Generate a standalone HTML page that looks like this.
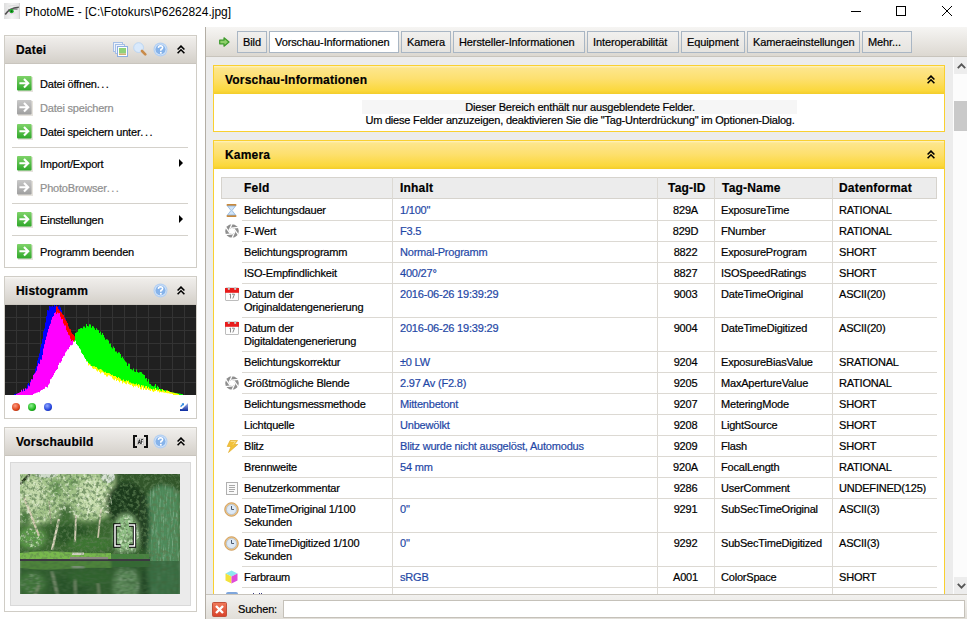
<!DOCTYPE html>
<html><head><meta charset="utf-8">
<style>
*{box-sizing:border-box;margin:0;padding:0}
html,body{width:967px;height:619px;overflow:hidden;background:#fff;font-family:"Liberation Sans",sans-serif;font-size:11px;line-height:13px;color:#000;letter-spacing:-0.2px;-webkit-text-stroke:0.2px currentColor}
.a{position:absolute}
.lp{left:4px;width:193px;border:1px solid #d0cdc6;background:#fff}
.lph{left:0;top:0;width:191px;height:28px;background:linear-gradient(#f8f6f3 0,#efedea 2px,#e3e0dc 50%,#d4d0c9);border-bottom:1px solid #c9c5be}
.lph .h{left:11px;top:8px;font-weight:bold;font-size:12px;letter-spacing:0.2px;color:#000}
.mi{left:35px;white-space:nowrap;color:#000}
.dis{color:#8f8f8f}
.sep{left:7px;width:176px;height:1px;background:#d4d1cb}
.tri{left:174px;width:0;height:0;border-top:4px solid transparent;border-bottom:4px solid transparent;border-left:4px solid #000}
#rborder{left:205px;top:27px;width:1px;height:592px;background:#b3aea5}
#tb{left:206px;top:27px;width:761px;height:30px;background:linear-gradient(#f6f5f3,#dcd8d1);border-bottom:1px solid #c8c4bc}
.tab{top:4px;height:22px;border:1px solid #a9b6c4;background:linear-gradient(#f1f0ee,#e6e4e0);padding-left:5px;letter-spacing:-0.1px;line-height:20px;white-space:nowrap}
.tab.act{background:#fff}
#content{left:206px;top:57px;width:747px;height:537px;background:#ececec;overflow:hidden}
.yp{border:1px solid #f9d030;background:#fff}
.yph{left:0;top:0;height:28px;background:linear-gradient(#fff4c4 0,#fde68c 2px,#fde070 45%,#fbd83c 88%,#f3cd2a 100%)}
.yph .h{left:11px;top:8px;font-weight:bold;font-size:12px;letter-spacing:0.2px}
#sb{left:953px;top:57px;width:14px;height:537px;background:#fcfcfc}
#search{left:206px;top:594px;width:761px;height:25px;background:linear-gradient(#f2f1ef,#e1ded8);border-top:1px solid #c8c4bc}
.row{left:0;width:716px}
.c{position:absolute;top:0;white-space:nowrap}
.ln{position:absolute;height:1px;background:#dcd9d3}
.vl{position:absolute;width:1px;background:#dcd9d3}
.blue{color:#1f48a6}

</style></head><body>
<svg width="0" height="0" style="position:absolute"><defs>
<linearGradient id="ggreen" x1="0" y1="0" x2="0" y2="1"><stop offset="0" stop-color="#7fd36a"/><stop offset="1" stop-color="#2fa82a"/></linearGradient>
<linearGradient id="gred" x1="0" y1="0" x2="0" y2="1"><stop offset="0" stop-color="#f07a5a"/><stop offset="1" stop-color="#d8422a"/></linearGradient>
<linearGradient id="gg" x1="0" y1="0" x2="0" y2="1"><stop offset="0" stop-color="#c8c8c8"/><stop offset="1" stop-color="#9f9f9f"/></linearGradient>
</defs></svg>
<div class="a" style="left:0;top:0;width:967px;height:27px;background:#fff">
<svg class="a" style="left:4px;top:3px" width="16" height="16" viewBox="0 0 16 16">
<defs><linearGradient id="eyebg" x1="0" y1="0" x2="1" y2="0"><stop offset="0" stop-color="#dedede"/><stop offset="0.5" stop-color="#f4f4f4"/><stop offset="0.9" stop-color="#e6e6e6"/><stop offset="1" stop-color="#c9c9c9"/></linearGradient></defs>
<rect width="16" height="16" fill="url(#eyebg)"/>
<path d="M4 10.5 Q8 12.8 12 10.2 L11 8.5 Q7.5 10 4.5 9 Z" fill="#ecdcec"/>
<path d="M1.2 11.5 Q5 5 14.8 4.2" fill="none" stroke="#505050" stroke-width="1.6"/>
<path d="M4 7 Q8 5.5 13.5 6.2" fill="none" stroke="#6a6a6a" stroke-width="1"/>
<path d="M4.6 3.2 Q9 2.2 13.5 3" fill="none" stroke="#d0d0d0" stroke-width="0.8"/>
<circle cx="7.6" cy="8.2" r="2.1" fill="#1faa2a"/>
<circle cx="7.6" cy="8.2" r="0.8" fill="#0a4a10"/>
</svg>
<div class="a" style="left:25px;top:5px;font-size:12px;line-height:14px;letter-spacing:0;-webkit-text-stroke:0">PhotoME - [C:\Fotokurs\P6262824.jpg]</div>
<div class="a" style="left:851px;top:11px;width:10px;height:1px;background:#000"></div>
<div class="a" style="left:896px;top:6px;width:10px;height:10px;border:1px solid #000"></div>
<svg class="a" style="left:942px;top:6px" width="10" height="10" viewBox="0 0 10 10"><path d="M0 0 L10 10 M10 0 L0 10" stroke="#000" stroke-width="1"/></svg>
</div>

<div class="a lp" style="top:35px;height:233px">
<div class="a lph"><div class="a h">Datei</div>
<svg class="a" style="left:108px;top:6px" width="15" height="15" viewBox="0 0 15 15">
<rect x="0.5" y="0.5" width="9" height="9" fill="#eef3fb" stroke="#a6bfe6"/>
<rect x="2.5" y="2.5" width="9" height="9" fill="#eef3fb" stroke="#a6bfe6"/>
<rect x="4.5" y="4.5" width="10" height="10" fill="#fff" stroke="#8eaee0"/>
<rect x="6" y="6" width="7" height="5.5" fill="#8fd27a"/><rect x="6" y="11.5" width="7" height="1.5" fill="#d0ad72"/>
</svg>
<svg class="a" style="left:128px;top:6px" width="14" height="14" viewBox="0 0 14 14">
<circle cx="5.6" cy="5.6" r="4.9" fill="#d9e9fb" stroke="#bcd6f3" stroke-width="1"/>
<line x1="9" y1="9" x2="12.3" y2="12.3" stroke="#c98b4a" stroke-width="2.6" stroke-linecap="round"/>
</svg>
<svg class="a" style="left:148px;top:6px" width="15" height="15" viewBox="0 0 15 15"><circle cx="7.5" cy="7.5" r="7" fill="#b4d0f2"/><circle cx="7.5" cy="7.5" r="5.8" fill="#d9e8fa"/><circle cx="7.5" cy="7.5" r="5.1" fill="#86b3ea"/><path d="M5.4 5.9 Q5.5 3.7 7.6 3.7 Q9.7 3.8 9.6 5.6 Q9.5 6.9 7.9 7.6 L7.8 8.7" fill="none" stroke="#fff" stroke-width="1.6"/><rect x="7" y="9.9" width="1.7" height="1.7" fill="#fff"/></svg><svg class="a" style="left:172px;top:9px" width="8" height="9" viewBox="0 0 8 9"><path d="M0.6 4.5 L4 1.1 L7.4 4.5 M0.6 8.2 L4 4.8 L7.4 8.2" fill="none" stroke="#000" stroke-width="1.6"/></svg></div>
<svg class="a" style="left:12px;top:40px" width="16" height="16" viewBox="0 0 16 16"><rect x="1" y="1" width="15" height="15" fill="#e6e3dd"/><rect x="0" y="0" width="14.6" height="14.6" rx="1" fill="url(#ggreen)"/><path d="M2.4 7.3 H11 M7 3 L11.2 7.3 L7 11.6" fill="none" stroke="#fff" stroke-width="2.1"/></svg><div class="a mi" style="top:42px">Datei öffnen<span style="letter-spacing:1.5px">...</span></div>
<svg class="a" style="left:12px;top:64px" width="16" height="16" viewBox="0 0 16 16"><rect x="1" y="1" width="15" height="15" fill="#e6e3dd"/><rect x="0" y="0" width="14.6" height="14.6" rx="1" fill="url(#gg)"/><path d="M2.4 7.3 H11 M7 3 L11.2 7.3 L7 11.6" fill="none" stroke="#fff" stroke-width="2.1"/></svg><div class="a mi dis" style="top:66px">Datei speichern</div>
<svg class="a" style="left:12px;top:88px" width="16" height="16" viewBox="0 0 16 16"><rect x="1" y="1" width="15" height="15" fill="#e6e3dd"/><rect x="0" y="0" width="14.6" height="14.6" rx="1" fill="url(#ggreen)"/><path d="M2.4 7.3 H11 M7 3 L11.2 7.3 L7 11.6" fill="none" stroke="#fff" stroke-width="2.1"/></svg><div class="a mi" style="top:90px">Datei speichern unter<span style="letter-spacing:1.5px">...</span></div>
<svg class="a" style="left:12px;top:120px" width="16" height="16" viewBox="0 0 16 16"><rect x="1" y="1" width="15" height="15" fill="#e6e3dd"/><rect x="0" y="0" width="14.6" height="14.6" rx="1" fill="url(#ggreen)"/><path d="M2.4 7.3 H11 M7 3 L11.2 7.3 L7 11.6" fill="none" stroke="#fff" stroke-width="2.1"/></svg><div class="a mi" style="top:122px">Import/Export</div>
<svg class="a" style="left:12px;top:144px" width="16" height="16" viewBox="0 0 16 16"><rect x="1" y="1" width="15" height="15" fill="#e6e3dd"/><rect x="0" y="0" width="14.6" height="14.6" rx="1" fill="url(#gg)"/><path d="M2.4 7.3 H11 M7 3 L11.2 7.3 L7 11.6" fill="none" stroke="#fff" stroke-width="2.1"/></svg><div class="a mi dis" style="top:146px">PhotoBrowser<span style="letter-spacing:1.5px">...</span></div>
<svg class="a" style="left:12px;top:176px" width="16" height="16" viewBox="0 0 16 16"><rect x="1" y="1" width="15" height="15" fill="#e6e3dd"/><rect x="0" y="0" width="14.6" height="14.6" rx="1" fill="url(#ggreen)"/><path d="M2.4 7.3 H11 M7 3 L11.2 7.3 L7 11.6" fill="none" stroke="#fff" stroke-width="2.1"/></svg><div class="a mi" style="top:178px">Einstellungen</div>
<svg class="a" style="left:12px;top:208px" width="16" height="16" viewBox="0 0 16 16"><rect x="1" y="1" width="15" height="15" fill="#e6e3dd"/><rect x="0" y="0" width="14.6" height="14.6" rx="1" fill="url(#ggreen)"/><path d="M2.4 7.3 H11 M7 3 L11.2 7.3 L7 11.6" fill="none" stroke="#fff" stroke-width="2.1"/></svg><div class="a mi" style="top:210px">Programm beenden</div>
<div class="a sep" style="top:111px"></div>
<div class="a sep" style="top:167px"></div>
<div class="a sep" style="top:199px"></div>
<div class="a tri" style="top:123px"></div>
<div class="a tri" style="top:179px"></div>
</div>
<div class="a lp" style="top:276px;height:143px">
<div class="a lph"><div class="a h">Histogramm</div>
<svg class="a" style="left:148px;top:6px" width="15" height="15" viewBox="0 0 15 15"><circle cx="7.5" cy="7.5" r="7" fill="#b4d0f2"/><circle cx="7.5" cy="7.5" r="5.8" fill="#d9e8fa"/><circle cx="7.5" cy="7.5" r="5.1" fill="#86b3ea"/><path d="M5.4 5.9 Q5.5 3.7 7.6 3.7 Q9.7 3.8 9.6 5.6 Q9.5 6.9 7.9 7.6 L7.8 8.7" fill="none" stroke="#fff" stroke-width="1.6"/><rect x="7" y="9.9" width="1.7" height="1.7" fill="#fff"/></svg><svg class="a" style="left:172px;top:9px" width="8" height="9" viewBox="0 0 8 9"><path d="M0.6 4.5 L4 1.1 L7.4 4.5 M0.6 8.2 L4 4.8 L7.4 8.2" fill="none" stroke="#000" stroke-width="1.6"/></svg></div>
<svg class="a" style="left:0;top:28px" width="191" height="90" viewBox="0 0 191 90"><rect width="191" height="90" fill="#202020"/><rect x="11" y="0" width="1" height="90" fill="#333333"/><rect x="23" y="0" width="1" height="90" fill="#333333"/><rect x="35" y="0" width="1" height="90" fill="#333333"/><rect x="47" y="0" width="1" height="90" fill="#333333"/><rect x="59" y="0" width="1" height="90" fill="#333333"/><rect x="71" y="0" width="1" height="90" fill="#333333"/><rect x="83" y="0" width="1" height="90" fill="#333333"/><rect x="95" y="0" width="1" height="90" fill="#333333"/><rect x="107" y="0" width="1" height="90" fill="#333333"/><rect x="119" y="0" width="1" height="90" fill="#333333"/><rect x="131" y="0" width="1" height="90" fill="#333333"/><rect x="143" y="0" width="1" height="90" fill="#333333"/><rect x="155" y="0" width="1" height="90" fill="#333333"/><rect x="167" y="0" width="1" height="90" fill="#333333"/><rect x="179" y="0" width="1" height="90" fill="#333333"/><rect x="0" y="12" width="191" height="1" fill="#333333"/><rect x="0" y="25" width="191" height="1" fill="#333333"/><rect x="0" y="38" width="191" height="1" fill="#333333"/><rect x="0" y="51" width="191" height="1" fill="#333333"/><rect x="0" y="64" width="191" height="1" fill="#333333"/><rect x="0" y="77" width="191" height="1" fill="#333333"/><path d="M9 90 L9.0 89.0 L10.0 89.0 L10.0 88.8 L11.0 88.8 L11.0 88.7 L12.0 88.7 L12.0 88.5 L13.0 88.5 L13.0 88.3 L14.0 88.3 L14.0 88.2 L15.0 88.2 L15.0 88.0 L16.0 88.0 L16.0 87.2 L17.0 87.2 L17.0 85.5 L18.0 85.5 L18.0 85.9 L19.0 85.9 L19.0 84.5 L20.0 84.5 L20.0 84.2 L21.0 84.2 L21.0 83.0 L22.0 83.0 L22.0 79.5 L23.0 79.5 L23.0 78.1 L24.0 78.1 L24.0 79.7 L25.0 79.7 L25.0 75.7 L26.0 75.7 L26.0 73.9 L27.0 73.9 L27.0 74.3 L28.0 74.3 L28.0 69.5 L29.0 69.5 L29.0 68.3 L30.0 68.3 L30.0 63.6 L31.0 63.6 L31.0 60.9 L32.0 60.9 L32.0 55.6 L33.0 55.6 L33.0 52.5 L34.0 52.5 L34.0 48.5 L35.0 48.5 L35.0 42.6 L36.0 42.6 L36.0 39.0 L37.0 39.0 L37.0 33.7 L38.0 33.7 L38.0 26.3 L39.0 26.3 L39.0 23.5 L40.0 23.5 L40.0 17.4 L41.0 17.4 L41.0 11.2 L42.0 11.2 L42.0 5.1 L43.0 5.1 L43.0 5.5 L44.0 5.5 L44.0 0.9 L45.0 0.9 L45.0 1.4 L46.0 1.4 L46.0 1.5 L47.0 1.5 L47.0 0.9 L48.0 0.9 L48.0 1.7 L49.0 1.7 L49.0 -0.4 L50.0 -0.4 L50.0 1.2 L51.0 1.2 L51.0 -0.2 L52.0 -0.2 L52.0 1.7 L53.0 1.7 L53.0 1.5 L54.0 1.5 L54.0 0.4 L55.0 0.4 L55.0 2.5 L56.0 2.5 L56.0 4.9 L57.0 4.9 L57.0 9.9 L58.0 9.9 L58.0 9.7 L59.0 9.7 L59.0 12.5 L60.0 12.5 L60.0 13.2 L61.0 13.2 L61.0 16.7 L62.0 16.7 L62.0 18.9 L63.0 18.9 L63.0 21.4 L64.0 21.4 L64.0 24.3 L65.0 24.3 L65.0 26.3 L66.0 26.3 L66.0 29.6 L67.0 29.6 L67.0 30.7 L68.0 30.7 L68.0 33.0 L69.0 33.0 L69.0 34.1 L70.0 34.1 L70.0 36.0 L71.0 36.0 L71.0 89.0 L72.0 89.0 L72 90 Z" fill="#0000ff"/><path d="M50 90 L50.0 89.0 L51.0 89.0 L51.0 1.3 L52.0 1.3 L52.0 1.7 L53.0 1.7 L53.0 4.1 L54.0 4.1 L54.0 5.5 L55.0 5.5 L55.0 6.6 L56.0 6.6 L56.0 7.6 L57.0 7.6 L57.0 9.3 L58.0 9.3 L58.0 10.0 L59.0 10.0 L59.0 12.5 L60.0 12.5 L60.0 14.4 L61.0 14.4 L61.0 16.2 L62.0 16.2 L62.0 18.1 L63.0 18.1 L63.0 21.6 L64.0 21.6 L64.0 23.8 L65.0 23.8 L65.0 24.3 L66.0 24.3 L66.0 27.5 L67.0 27.5 L67.0 28.9 L68.0 28.9 L68.0 29.8 L69.0 29.8 L69.0 31.3 L70.0 31.3 L70.0 33.4 L71.0 33.4 L71.0 40.6 L72.0 40.6 L72.0 89.0 L73.0 89.0 L73 90 Z" fill="#ff0000"/><path d="M11 90 L11.0 89.0 L12.0 89.0 L12.0 88.5 L13.0 88.5 L13.0 88.0 L14.0 88.0 L14.0 87.5 L15.0 87.5 L15.0 87.0 L16.0 87.0 L16.0 84.7 L17.0 84.7 L17.0 86.5 L18.0 86.5 L18.0 83.7 L19.0 83.7 L19.0 85.9 L20.0 85.9 L20.0 83.2 L21.0 83.2 L21.0 84.2 L22.0 84.2 L22.0 83.4 L23.0 83.4 L23.0 80.4 L24.0 80.4 L24.0 81.2 L25.0 81.2 L25.0 77.2 L26.0 77.2 L26.0 74.3 L27.0 74.3 L27.0 74.4 L28.0 74.4 L28.0 70.1 L29.0 70.1 L29.0 68.8 L30.0 68.8 L30.0 67.6 L31.0 67.6 L31.0 65.8 L32.0 65.8 L32.0 61.3 L33.0 61.3 L33.0 58.2 L34.0 58.2 L34.0 59.1 L35.0 59.1 L35.0 54.6 L36.0 54.6 L36.0 54.8 L37.0 54.8 L37.0 50.1 L38.0 50.1 L38.0 43.5 L39.0 43.5 L39.0 39.3 L40.0 39.3 L40.0 35.1 L41.0 35.1 L41.0 31.6 L42.0 31.6 L42.0 27.4 L43.0 27.4 L43.0 23.9 L44.0 23.9 L44.0 20.8 L45.0 20.8 L45.0 18.8 L46.0 18.8 L46.0 14.7 L47.0 14.7 L47.0 12.1 L48.0 12.1 L48.0 10.9 L49.0 10.9 L49.0 8.0 L50.0 8.0 L50.0 7.2 L51.0 7.2 L51.0 8.9 L52.0 8.9 L52.0 7.6 L53.0 7.6 L53.0 8.2 L54.0 8.2 L54.0 8.0 L55.0 8.0 L55.0 11.7 L56.0 11.7 L56.0 14.3 L57.0 14.3 L57.0 14.1 L58.0 14.1 L58.0 18.5 L59.0 18.5 L59.0 20.5 L60.0 20.5 L60.0 20.6 L61.0 20.6 L61.0 25.2 L62.0 25.2 L62.0 26.9 L63.0 26.9 L63.0 29.7 L64.0 29.7 L64.0 30.4 L65.0 30.4 L65.0 33.8 L66.0 33.8 L66.0 36.0 L67.0 36.0 L67.0 35.1 L68.0 35.1 L68.0 37.2 L69.0 37.2 L69.0 43.7 L70.0 43.7 L70.0 89.0 L71.0 89.0 L71 90 Z" fill="#ff00ff"/><path d="M68 90 L68.0 89.0 L69.0 89.0 L69.0 35.0 L70.0 35.0 L70.0 27.9 L71.0 27.9 L71.0 27.5 L72.0 27.5 L72.0 26.7 L73.0 26.7 L73.0 24.2 L74.0 24.2 L74.0 23.9 L75.0 23.9 L75.0 23.2 L76.0 23.2 L76.0 22.9 L77.0 22.9 L77.0 23.4 L78.0 23.4 L78.0 21.6 L79.0 21.6 L79.0 21.5 L80.0 21.5 L80.0 22.7 L81.0 22.7 L81.0 18.9 L82.0 18.9 L82.0 21.0 L83.0 21.0 L83.0 21.4 L84.0 21.4 L84.0 19.2 L85.0 19.2 L85.0 19.4 L86.0 19.4 L86.0 22.7 L87.0 22.7 L87.0 20.9 L88.0 20.9 L88.0 21.4 L89.0 21.4 L89.0 23.2 L90.0 23.2 L90.0 25.1 L91.0 25.1 L91.0 23.2 L92.0 23.2 L92.0 24.7 L93.0 24.7 L93.0 25.3 L94.0 25.3 L94.0 28.0 L95.0 28.0 L95.0 26.7 L96.0 26.7 L96.0 29.8 L97.0 29.8 L97.0 27.9 L98.0 27.9 L98.0 29.9 L99.0 29.9 L99.0 32.5 L100.0 32.5 L100.0 34.7 L101.0 34.7 L101.0 34.2 L102.0 34.2 L102.0 34.6 L103.0 34.6 L103.0 35.5 L104.0 35.5 L104.0 38.7 L105.0 38.7 L105.0 38.6 L106.0 38.6 L106.0 42.3 L107.0 42.3 L107.0 43.5 L108.0 43.5 L108.0 41.6 L109.0 41.6 L109.0 43.0 L110.0 43.0 L110.0 46.4 L111.0 46.4 L111.0 46.6 L112.0 46.6 L112.0 48.3 L113.0 48.3 L113.0 47.3 L114.0 47.3 L114.0 47.4 L115.0 47.4 L115.0 49.1 L116.0 49.1 L116.0 52.7 L117.0 52.7 L117.0 51.8 L118.0 51.8 L118.0 53.5 L119.0 53.5 L119.0 55.2 L120.0 55.2 L120.0 56.6 L121.0 56.6 L121.0 57.6 L122.0 57.6 L122.0 60.9 L123.0 60.9 L123.0 58.5 L124.0 58.5 L124.0 58.8 L125.0 58.8 L125.0 64.0 L126.0 64.0 L126.0 64.3 L127.0 64.3 L127.0 65.3 L128.0 65.3 L128.0 63.5 L129.0 63.5 L129.0 66.4 L130.0 66.4 L130.0 66.9 L131.0 66.9 L131.0 64.2 L132.0 64.2 L132.0 66.9 L133.0 66.9 L133.0 67.7 L134.0 67.7 L134.0 67.3 L135.0 67.3 L135.0 67.1 L136.0 67.1 L136.0 67.3 L137.0 67.3 L137.0 68.7 L138.0 68.7 L138.0 69.4 L139.0 69.4 L139.0 69.9 L140.0 69.9 L140.0 73.4 L141.0 73.4 L141.0 73.1 L142.0 73.1 L142.0 76.4 L143.0 76.4 L143.0 74.0 L144.0 74.0 L144.0 78.8 L145.0 78.8 L145.0 78.9 L146.0 78.9 L146.0 80.5 L147.0 80.5 L147.0 80.9 L148.0 80.9 L148.0 81.6 L149.0 81.6 L149.0 80.7 L150.0 80.7 L150.0 78.9 L151.0 78.9 L151.0 82.7 L152.0 82.7 L152.0 80.8 L153.0 80.8 L153.0 81.9 L154.0 81.9 L154.0 84.1 L155.0 84.1 L155.0 84.1 L156.0 84.1 L156.0 84.0 L157.0 84.0 L157.0 86.7 L158.0 86.7 L158.0 85.7 L159.0 85.7 L159.0 84.9 L160.0 84.9 L160.0 84.9 L161.0 84.9 L161.0 87.8 L162.0 87.8 L162.0 86.3 L163.0 86.3 L163.0 87.8 L164.0 87.8 L164.0 86.1 L165.0 86.1 L165.0 87.0 L166.0 87.0 L166.0 87.2 L167.0 87.2 L167.0 87.4 L168.0 87.4 L168.0 87.6 L169.0 87.6 L169.0 87.8 L170.0 87.8 L170.0 88.0 L171.0 88.0 L171.0 88.1 L172.0 88.1 L172.0 88.3 L173.0 88.3 L173.0 88.4 L174.0 88.4 L174.0 88.6 L175.0 88.6 L175.0 88.7 L176.0 88.7 L176.0 88.9 L177.0 88.9 L177.0 89.0 L178.0 89.0 L178 90 Z" fill="#00ff00"/><path d="M77 90 L77.0 89.0 L78.0 89.0 L78.0 51.9 L79.0 51.9 L79.0 53.5 L80.0 53.5 L80.0 55.1 L81.0 55.1 L81.0 55.7 L82.0 55.7 L82.0 57.5 L83.0 57.5 L83.0 58.9 L84.0 58.9 L84.0 60.1 L85.0 60.1 L85.0 61.3 L86.0 61.3 L86.0 61.0 L87.0 61.0 L87.0 62.1 L88.0 62.1 L88.0 62.9 L89.0 62.9 L89.0 62.5 L90.0 62.5 L90.0 75.8 L91.0 75.8 L91.0 89.0 L92.0 89.0 L92 90 Z" fill="#00ffff"/><path d="M68 90 L68.0 89.0 L69.0 89.0 L69.0 36.4 L70.0 36.4 L70.0 39.1 L71.0 39.1 L71.0 40.8 L72.0 40.8 L72.0 42.9 L73.0 42.9 L73.0 45.4 L74.0 45.4 L74.0 45.3 L75.0 45.3 L75.0 47.2 L76.0 47.2 L76.0 49.1 L77.0 49.1 L77.0 50.6 L78.0 50.6 L78.0 52.0 L79.0 52.0 L79.0 55.6 L80.0 55.6 L80.0 56.9 L81.0 56.9 L81.0 55.8 L82.0 55.8 L82.0 57.6 L83.0 57.6 L83.0 58.0 L84.0 58.0 L84.0 58.8 L85.0 58.8 L85.0 59.6 L86.0 59.6 L86.0 60.9 L87.0 60.9 L87.0 61.2 L88.0 61.2 L88.0 61.2 L89.0 61.2 L89.0 61.3 L90.0 61.3 L90.0 62.1 L91.0 62.1 L91.0 62.1 L92.0 62.1 L92.0 63.6 L93.0 63.6 L93.0 64.5 L94.0 64.5 L94.0 64.2 L95.0 64.2 L95.0 64.0 L96.0 64.0 L96.0 64.6 L97.0 64.6 L97.0 65.5 L98.0 65.5 L98.0 66.5 L99.0 66.5 L99.0 67.3 L100.0 67.3 L100.0 66.7 L101.0 66.7 L101.0 68.1 L102.0 68.1 L102.0 68.1 L103.0 68.1 L103.0 68.0 L104.0 68.0 L104.0 68.3 L105.0 68.3 L105.0 69.0 L106.0 69.0 L106.0 70.0 L107.0 70.0 L107.0 69.8 L108.0 69.8 L108.0 71.0 L109.0 71.0 L109.0 70.9 L110.0 70.9 L110.0 70.9 L111.0 70.9 L111.0 72.1 L112.0 72.1 L112.0 73.0 L113.0 73.0 L113.0 72.0 L114.0 72.0 L114.0 73.3 L115.0 73.3 L115.0 73.8 L116.0 73.8 L116.0 75.2 L117.0 75.2 L117.0 75.6 L118.0 75.6 L118.0 74.6 L119.0 74.6 L119.0 76.2 L120.0 76.2 L120.0 76.2 L121.0 76.2 L121.0 75.2 L122.0 75.2 L122.0 76.0 L123.0 76.0 L123.0 75.5 L124.0 75.5 L124.0 77.5 L125.0 77.5 L125.0 77.4 L126.0 77.4 L126.0 78.3 L127.0 78.3 L127.0 78.5 L128.0 78.5 L128.0 78.6 L129.0 78.6 L129.0 79.2 L130.0 79.2 L130.0 79.2 L131.0 79.2 L131.0 78.4 L132.0 78.4 L132.0 80.0 L133.0 80.0 L133.0 79.0 L134.0 79.0 L134.0 79.7 L135.0 79.7 L135.0 81.7 L136.0 81.7 L136.0 80.1 L137.0 80.1 L137.0 80.4 L138.0 80.4 L138.0 80.6 L139.0 80.6 L139.0 82.7 L140.0 82.7 L140.0 81.2 L141.0 81.2 L141.0 81.1 L142.0 81.1 L142.0 83.2 L143.0 83.2 L143.0 81.7 L144.0 81.7 L144.0 83.6 L145.0 83.6 L145.0 83.4 L146.0 83.4 L146.0 84.0 L147.0 84.0 L147.0 84.5 L148.0 84.5 L148.0 83.8 L149.0 83.8 L149.0 84.5 L150.0 84.5 L150.0 82.9 L151.0 82.9 L151.0 84.8 L152.0 84.8 L152.0 84.4 L153.0 84.4 L153.0 85.1 L154.0 85.1 L154.0 83.9 L155.0 83.9 L155.0 85.6 L156.0 85.6 L156.0 86.2 L157.0 86.2 L157.0 84.3 L158.0 84.3 L158.0 85.2 L159.0 85.2 L159.0 86.0 L160.0 86.0 L160.0 86.8 L161.0 86.8 L161.0 85.6 L162.0 85.6 L162.0 85.6 L163.0 85.6 L163.0 86.0 L164.0 86.0 L164.0 87.1 L165.0 87.1 L165.0 87.0 L166.0 87.0 L166.0 87.2 L167.0 87.2 L167.0 87.5 L168.0 87.5 L168.0 87.8 L169.0 87.8 L169.0 88.0 L170.0 88.0 L170.0 88.2 L171.0 88.2 L171.0 88.5 L172.0 88.5 L172.0 88.8 L173.0 88.8 L173.0 89.0 L174.0 89.0 L174 90 Z" fill="#ffff00"/><path d="M28 90 L28.0 89.0 L29.0 89.0 L29.0 88.6 L30.0 88.6 L30.0 88.2 L31.0 88.2 L31.0 87.8 L32.0 87.8 L32.0 87.4 L33.0 87.4 L33.0 87.0 L34.0 87.0 L34.0 87.3 L35.0 87.3 L35.0 85.7 L36.0 85.7 L36.0 85.1 L37.0 85.1 L37.0 84.7 L38.0 84.7 L38.0 84.1 L39.0 84.1 L39.0 83.8 L40.0 83.8 L40.0 81.7 L41.0 81.7 L41.0 82.0 L42.0 82.0 L42.0 82.4 L43.0 82.4 L43.0 79.7 L44.0 79.7 L44.0 78.4 L45.0 78.4 L45.0 74.3 L46.0 74.3 L46.0 73.6 L47.0 73.6 L47.0 72.1 L48.0 72.1 L48.0 70.2 L49.0 70.2 L49.0 68.1 L50.0 68.1 L50.0 66.2 L51.0 66.2 L51.0 64.9 L52.0 64.9 L52.0 63.9 L53.0 63.9 L53.0 59.9 L54.0 59.9 L54.0 57.8 L55.0 57.8 L55.0 57.7 L56.0 57.7 L56.0 56.2 L57.0 56.2 L57.0 53.1 L58.0 53.1 L58.0 51.3 L59.0 51.3 L59.0 50.7 L60.0 50.7 L60.0 47.6 L61.0 47.6 L61.0 46.3 L62.0 46.3 L62.0 44.6 L63.0 44.6 L63.0 44.3 L64.0 44.3 L64.0 41.9 L65.0 41.9 L65.0 40.2 L66.0 40.2 L66.0 40.2 L67.0 40.2 L67.0 39.7 L68.0 39.7 L68.0 36.4 L69.0 36.4 L69.0 37.1 L70.0 37.1 L70.0 35.7 L71.0 35.7 L71.0 39.1 L72.0 39.1 L72.0 40.3 L73.0 40.3 L73.0 41.3 L74.0 41.3 L74.0 43.2 L75.0 43.2 L75.0 44.6 L76.0 44.6 L76.0 47.7 L77.0 47.7 L77.0 49.1 L78.0 49.1 L78.0 50.3 L79.0 50.3 L79.0 52.6 L80.0 52.6 L80.0 54.0 L81.0 54.0 L81.0 56.8 L82.0 56.8 L82.0 56.4 L83.0 56.4 L83.0 60.5 L84.0 60.5 L84.0 59.7 L85.0 59.7 L85.0 60.9 L86.0 60.9 L86.0 61.3 L87.0 61.3 L87.0 63.2 L88.0 63.2 L88.0 64.0 L89.0 64.0 L89.0 63.7 L90.0 63.7 L90.0 64.1 L91.0 64.1 L91.0 65.4 L92.0 65.4 L92.0 66.4 L93.0 66.4 L93.0 65.6 L94.0 65.6 L94.0 67.1 L95.0 67.1 L95.0 68.4 L96.0 68.4 L96.0 67.4 L97.0 67.4 L97.0 67.2 L98.0 67.2 L98.0 67.7 L99.0 67.7 L99.0 69.7 L100.0 69.7 L100.0 70.0 L101.0 70.0 L101.0 71.4 L102.0 71.4 L102.0 71.6 L103.0 71.6 L103.0 70.2 L104.0 70.2 L104.0 70.6 L105.0 70.6 L105.0 71.3 L106.0 71.3 L106.0 71.6 L107.0 71.6 L107.0 73.6 L108.0 73.6 L108.0 74.6 L109.0 74.6 L109.0 75.2 L110.0 75.2 L110.0 73.8 L111.0 73.8 L111.0 76.1 L112.0 76.1 L112.0 74.9 L113.0 74.9 L113.0 75.8 L114.0 75.8 L114.0 77.2 L115.0 77.2 L115.0 75.8 L116.0 75.8 L116.0 76.1 L117.0 76.1 L117.0 78.6 L118.0 78.6 L118.0 77.3 L119.0 77.3 L119.0 77.8 L120.0 77.8 L120.0 78.7 L121.0 78.7 L121.0 79.3 L122.0 79.3 L122.0 77.6 L123.0 77.6 L123.0 78.9 L124.0 78.9 L124.0 79.5 L125.0 79.5 L125.0 80.0 L126.0 80.0 L126.0 79.4 L127.0 79.4 L127.0 80.9 L128.0 80.9 L128.0 82.3 L129.0 82.3 L129.0 80.9 L130.0 80.9 L130.0 81.6 L131.0 81.6 L131.0 80.7 L132.0 80.7 L132.0 81.4 L133.0 81.4 L133.0 82.9 L134.0 82.9 L134.0 81.5 L135.0 81.5 L135.0 84.2 L136.0 84.2 L136.0 84.4 L137.0 84.4 L137.0 82.2 L138.0 82.2 L138.0 84.9 L139.0 84.9 L139.0 83.4 L140.0 83.4 L140.0 84.8 L141.0 84.8 L141.0 85.0 L142.0 85.0 L142.0 83.8 L143.0 83.8 L143.0 85.1 L144.0 85.1 L144.0 85.3 L145.0 85.3 L145.0 85.9 L146.0 85.9 L146.0 84.5 L147.0 84.5 L147.0 86.2 L148.0 86.2 L148.0 87.0 L149.0 87.0 L149.0 86.3 L150.0 86.3 L150.0 86.1 L151.0 86.1 L151.0 85.0 L152.0 85.0 L152.0 86.4 L153.0 86.4 L153.0 86.2 L154.0 86.2 L154.0 87.5 L155.0 87.5 L155.0 87.0 L156.0 87.0 L156.0 87.2 L157.0 87.2 L157.0 87.3 L158.0 87.3 L158.0 87.5 L159.0 87.5 L159.0 87.7 L160.0 87.7 L160.0 87.8 L161.0 87.8 L161.0 88.0 L162.0 88.0 L162.0 88.2 L163.0 88.2 L163.0 88.3 L164.0 88.3 L164.0 88.5 L165.0 88.5 L165.0 88.7 L166.0 88.7 L166.0 88.8 L167.0 88.8 L167.0 89.0 L168.0 89.0 L168 90 Z" fill="#ffffff"/></svg>
<div class="a" style="left:7px;top:126px;width:8px;height:8px;border-radius:50%;background:radial-gradient(circle at 40% 35%,#ff9a80,#d83a10 65%,#444 100%)"></div>
<div class="a" style="left:23px;top:126px;width:8px;height:8px;border-radius:50%;background:radial-gradient(circle at 40% 35%,#90f090,#10b010 65%,#444 100%)"></div>
<div class="a" style="left:39px;top:126px;width:8px;height:8px;border-radius:50%;background:radial-gradient(circle at 40% 35%,#90a8ff,#1a3ad8 65%,#444 100%)"></div>
<svg class="a" style="left:175px;top:126px" width="8" height="8" viewBox="0 0 8 8"><defs><linearGradient id="hic" x1="0" y1="0" x2="0" y2="1"><stop offset="0" stop-color="#a8b8e8"/><stop offset="1" stop-color="#0a2aa0"/></linearGradient></defs><path d="M0 8 V6 H2 L8 0 V8 Z" fill="url(#hic)"/><path d="M0.6 3.6 L3 1.2" stroke="#2a88e0" stroke-width="1.3"/><path d="M1.6 0.3 H4 V2.7 Z" fill="#2a88e0"/></svg>
</div>
<div class="a lp" style="top:427px;height:185px">
<div class="a lph"><div class="a h">Vorschaubild</div>
<svg class="a" style="left:128px;top:7px" width="15" height="13" viewBox="0 0 15 13"><path d="M4 1 H1 V12 H4 M11 1 H14 V12 H11" fill="none" stroke="#111" stroke-width="2"/><rect x="4.5" y="3.5" width="6" height="6" fill="#fff" stroke="#777" stroke-width="0.6" stroke-dasharray="1 1"/><path d="M5.2 9 L6.3 4.6 L7.4 9 M5.6 7.5 H7 M8.2 9 V4.6 H10 M8.2 6.8 H9.6" fill="none" stroke="#111" stroke-width="0.9"/></svg>
<svg class="a" style="left:148px;top:6px" width="15" height="15" viewBox="0 0 15 15"><circle cx="7.5" cy="7.5" r="7" fill="#b4d0f2"/><circle cx="7.5" cy="7.5" r="5.8" fill="#d9e8fa"/><circle cx="7.5" cy="7.5" r="5.1" fill="#86b3ea"/><path d="M5.4 5.9 Q5.5 3.7 7.6 3.7 Q9.7 3.8 9.6 5.6 Q9.5 6.9 7.9 7.6 L7.8 8.7" fill="none" stroke="#fff" stroke-width="1.6"/><rect x="7" y="9.9" width="1.7" height="1.7" fill="#fff"/></svg><svg class="a" style="left:172px;top:9px" width="8" height="9" viewBox="0 0 8 9"><path d="M0.6 4.5 L4 1.1 L7.4 4.5 M0.6 8.2 L4 4.8 L7.4 8.2" fill="none" stroke="#000" stroke-width="1.6"/></svg></div>
<div class="a" style="left:5px;top:34px;width:181px;height:144px;background:#ebebeb;border:1px solid #d9d9d9">
<svg class="a" style="left:9px;top:11px" width="160" height="120" viewBox="0 0 160 120">
<defs>
<filter id="bl" x="-30%" y="-30%" width="160%" height="160%"><feGaussianBlur stdDeviation="2.2"/></filter>
<filter id="bl2" x="-30%" y="-30%" width="160%" height="160%"><feGaussianBlur stdDeviation="0.5"/></filter>
<filter id="texd" x="0" y="0" width="100%" height="100%"><feTurbulence type="fractalNoise" baseFrequency="0.3" numOctaves="3" seed="7"/><feColorMatrix type="matrix" values="0 0 0 0 0.1  0 0 0 0 0.2  0 0 0 0 0.08  -4 0 0 0 2.2"/><feGaussianBlur stdDeviation="0.45"/></filter>
<filter id="texl" x="0" y="0" width="100%" height="100%"><feTurbulence type="fractalNoise" baseFrequency="0.3" numOctaves="3" seed="13"/><feColorMatrix type="matrix" values="0 0 0 0 0.85  0 0 0 0 0.92  0 0 0 0 0.75  4 0 0 0 -2.0"/><feGaussianBlur stdDeviation="0.45"/></filter>
<filter id="streak" x="0" y="0" width="100%" height="100%"><feTurbulence type="fractalNoise" baseFrequency="0.6 0.08" numOctaves="2" seed="5"/><feColorMatrix type="matrix" values="0 0 0 0 0.7  0 0 0 0 0.86  0 0 0 0 0.74  3 0 0 0 -1.4"/><feGaussianBlur stdDeviation="0.4"/></filter>
<filter id="rbl" x="0" y="0" width="100%" height="100%"><feGaussianBlur stdDeviation="0.9 0.3"/></filter>
<clipPath id="pc"><rect width="160" height="120"/></clipPath>
<clipPath id="sc"><rect width="160" height="87"/></clipPath>
<clipPath id="wc"><rect y="87" width="160" height="33"/></clipPath>
<clipPath id="wil"><path d="M128 20 Q132 8 146 10 Q162 12 162 30 V125 H130 Q124 90 128 60 Z"/><ellipse cx="106" cy="62" rx="14" ry="22"/></clipPath>
<clipPath id="lt"><path d="M0 0 H92 V38 Q75 50 58 44 Q45 38 30 46 Q15 52 0 48 Z"/><ellipse cx="106" cy="62" rx="13" ry="21"/><ellipse cx="12" cy="64" rx="12" ry="10"/></clipPath>
<g id="scene">
<rect width="160" height="88" fill="#3a6630"/>
<g filter="url(#bl)">
<rect x="95" y="-5" width="70" height="25" fill="#30572a"/>
<path d="M-5 -5 H95 V38 Q75 52 58 46 Q45 40 30 48 Q15 54 -5 50 Z" fill="#a2c288"/>
<ellipse cx="14" cy="20" rx="11" ry="16" fill="#c2d8a8"/>
<ellipse cx="72" cy="22" rx="14" ry="18" fill="#c6dcac"/>
<ellipse cx="46" cy="44" rx="8" ry="14" fill="#3f6e34"/>
<ellipse cx="36" cy="14" rx="6" ry="9" fill="#6a9a56"/>
<ellipse cx="5" cy="44" rx="6" ry="8" fill="#4a7a3c"/>
<ellipse cx="52" cy="8" rx="5" ry="6" fill="#7aa864"/>
<ellipse cx="106" cy="30" rx="20" ry="22" fill="#1f3a1e"/>
<ellipse cx="50" cy="60" rx="20" ry="10" fill="#2a5426"/>
<path d="M128 22 Q134 10 146 12 Q160 14 160 30 V120 H132 Q126 90 129 60 Z" fill="#4e8a5a"/>
<ellipse cx="106" cy="61" rx="13" ry="21" fill="#8cbc80"/>
<ellipse cx="12" cy="64" rx="14" ry="11" fill="#5c9a48"/>
<ellipse cx="70" cy="70" rx="22" ry="8" fill="#3c7432"/>
<ellipse cx="124" cy="48" rx="6" ry="30" fill="#223f20"/>
<ellipse cx="112" cy="82" rx="20" ry="5" fill="#2f5a2c"/>
</g>
<g filter="url(#bl2)">
<ellipse cx="26" cy="1" rx="11" ry="3" fill="#d5ddd4" opacity="0.85"/>
<ellipse cx="88" cy="3" rx="7" ry="6" fill="#d8e0da" opacity="0.9"/>
<path d="M0 10 L10 0" stroke="#25361e" stroke-width="2.5"/>
<path d="M4 23 L19 62" stroke="#d2cab0" stroke-width="2.2"/>
<path d="M39 45 L32 76" stroke="#d8d2bc" stroke-width="2.4"/>
<path d="M56 41 L55 68" stroke="#d0cbb4" stroke-width="2"/>
<path d="M81 35 L78 64" stroke="#cac4aa" stroke-width="1.8"/>
<path d="M29 27 L31 50" stroke="#a8a68c" stroke-width="1.1"/>
</g>
<rect width="160" height="88" filter="url(#texl)" clip-path="url(#lt)" opacity="0.65"/>
<rect width="160" height="88" filter="url(#streak)" clip-path="url(#wil)" opacity="0.3"/>
<rect width="160" height="88" filter="url(#texd)" opacity="0.7"/>
<g filter="url(#bl2)">
<path d="M0 79 Q20 76 45 78 T91 79 V86 H0 Z" fill="#78b84e"/>
<rect x="91" y="80" width="38" height="6" fill="#44823c"/>
<rect x="52" y="78.5" width="12" height="2.5" fill="#cfcfc0"/>
</g>
<rect y="76" width="160" height="12" filter="url(#texd)" opacity="0.45"/>
</g>
</defs>
<g clip-path="url(#pc)">
<use href="#scene" clip-path="url(#sc)"/>
<g clip-path="url(#wc)">
<g transform="translate(0,173) scale(1,-1)" filter="url(#rbl)"><use href="#scene"/></g>
<rect y="87" width="160" height="33" fill="#24502a" opacity="0.5"/>
</g>
<g filter="url(#bl2)">
<path d="M0 86 H130" stroke="#3a3840" stroke-width="2"/>
<rect x="50" y="83" width="38" height="2.2" fill="#8a8880"/>
</g>
<path d="M100.5 51 H95 V72 H100.5 M109 51 H114.5 V72 H109" fill="none" stroke="#000" stroke-width="3.4"/>
<path d="M100.5 51 H95 V72 H100.5 M109 51 H114.5 V72 H109" fill="none" stroke="#fff" stroke-width="1.5"/>
</g>
</svg>
</div>
</div>

<div id="rborder" class="a"></div>
<div id="tb" class="a">
<svg class="a" style="left:13px;top:10px" width="11" height="10" viewBox="0 0 11 10"><path d="M0.7 3.2 H5 V0.8 L10 5 L5 9.2 V6.8 H0.7 Z" fill="#8fd06a" stroke="#3c9a2a" stroke-width="1.2" stroke-linejoin="round"/></svg>
<div class="a tab" style="left:31px;width:30px">Bild</div>
<div class="a tab act" style="left:63px;width:130px">Vorschau-Informationen</div>
<div class="a tab" style="left:195px;width:50px">Kamera</div>
<div class="a tab" style="left:247px;width:132px">Hersteller-Informationen</div>
<div class="a tab" style="left:381px;width:92px">Interoperabilität</div>
<div class="a tab" style="left:475px;width:64px">Equipment</div>
<div class="a tab" style="left:541px;width:113px">Kameraeinstellungen</div>
<div class="a tab" style="left:656px;width:50px">Mehr...</div>
</div>
<div id="content" class="a">
<div class="a yp" style="left:7px;top:8px;width:732px;height:67px">
<div class="a yph" style="width:730px"><div class="a h">Vorschau-Informationen</div><svg class="a" style="left:713px;top:9px" width="8" height="9" viewBox="0 0 8 9"><path d="M0.6 4.5 L4 1.1 L7.4 4.5 M0.6 8.2 L4 4.8 L7.4 8.2" fill="none" stroke="#000" stroke-width="1.6"/></svg></div>
<div class="a" style="left:148px;top:34px;width:435px;height:14px;background:#f6f6f6"></div>
<div class="a" style="left:0;top:35px;width:730px;text-align:center;padding-left:2px">Dieser Bereich enthält nur ausgeblendete Felder.<br>Um diese Felder anzuzeigen, deaktivieren Sie die "Tag-Unterdrückung" im Optionen-Dialog.</div>
</div>
<div class="a yp" style="left:7px;top:83px;width:732px;height:470px">
<div class="a yph" style="width:730px"><div class="a h">Kamera</div><svg class="a" style="left:713px;top:9px" width="8" height="9" viewBox="0 0 8 9"><path d="M0.6 4.5 L4 1.1 L7.4 4.5 M0.6 8.2 L4 4.8 L7.4 8.2" fill="none" stroke="#000" stroke-width="1.6"/></svg></div>
<div class="a" style="left:7px;top:36px;width:716px;height:22px;background:#ececec;border:1px solid #d6d3cd"></div>
<div class="vl" style="left:178px;top:36px;height:619px"></div>
<div class="vl" style="left:443px;top:36px;height:619px"></div>
<div class="vl" style="left:500px;top:36px;height:619px"></div>
<div class="vl" style="left:618px;top:36px;height:619px"></div>
<div class="c" style="left:30px;top:41px;font-weight:bold;font-size:12px;letter-spacing:0.2px">Feld</div>
<div class="c" style="left:186px;top:41px;font-weight:bold;font-size:12px;letter-spacing:0.2px">Inhalt</div>
<div class="c" style="left:454px;top:41px;font-weight:bold;font-size:12px;letter-spacing:0.2px">Tag-ID</div>
<div class="c" style="left:508px;top:41px;font-weight:bold;font-size:12px;letter-spacing:0.2px">Tag-Name</div>
<div class="c" style="left:625px;top:41px;font-weight:bold;font-size:12px;letter-spacing:0.2px">Datenformat</div>
<div class="a" style="left:0;top:59px;width:730px;height:21px"><svg class="a" style="left:7px;margin-left:5px;top:4px" width="11" height="13" viewBox="0 0 11 13"><rect x="0.5" y="0" width="10" height="2" rx="1" fill="#c8883a"/><rect x="0.5" y="11" width="10" height="2" rx="1" fill="#c8883a"/><path d="M1.5 2 H9.5 L6 6.5 L9.5 11 H1.5 L5 6.5 Z" fill="#cfe3f7" stroke="#8fb3d9" stroke-width="0.8"/></svg><div class="c" style="left:30px;top:4px">Belichtungsdauer</div><div class="c blue" style="left:186px;top:4px">1/100"</div><div class="c" style="left:443px;width:57px;text-align:center;top:4px">829A</div><div class="c" style="left:507px;top:4px">ExposureTime</div><div class="c" style="left:625px;top:4px">RATIONAL</div></div>
<div class="ln" style="left:28px;top:79px;width:695px"></div>
<div class="a" style="left:0;top:80px;width:730px;height:21px"><svg class="a" style="left:7px;margin-left:4px;top:3px" width="14" height="14" viewBox="0 0 14 14"><circle cx="7" cy="7" r="6.8" fill="#8e8e8e"/><polygon points="10.09,7.83 7.83,10.09 4.74,9.26 3.91,6.17 6.17,3.91 9.26,4.74" fill="#fff"/><path d="M9.90 7.78 L6.09 15.93 M7.78 9.90 L-1.19 10.68 M4.88 9.12 L-0.28 1.75 M4.10 6.22 L7.91 -1.93 M6.22 4.10 L15.19 3.32 M9.12 4.88 L14.28 12.25 " stroke="#fff" stroke-width="1.2"/></svg><div class="c" style="left:30px;top:4px">F-Wert</div><div class="c blue" style="left:186px;top:4px">F3.5</div><div class="c" style="left:443px;width:57px;text-align:center;top:4px">829D</div><div class="c" style="left:507px;top:4px">FNumber</div><div class="c" style="left:625px;top:4px">RATIONAL</div></div>
<div class="ln" style="left:28px;top:100px;width:695px"></div>
<div class="a" style="left:0;top:101px;width:730px;height:21px"><div class="c" style="left:30px;top:4px">Belichtungsprogramm</div><div class="c blue" style="left:186px;top:4px">Normal-Programm</div><div class="c" style="left:443px;width:57px;text-align:center;top:4px">8822</div><div class="c" style="left:507px;top:4px">ExposureProgram</div><div class="c" style="left:625px;top:4px">SHORT</div></div>
<div class="ln" style="left:28px;top:121px;width:695px"></div>
<div class="a" style="left:0;top:122px;width:730px;height:21px"><div class="c" style="left:30px;top:4px">ISO-Empfindlichkeit</div><div class="c blue" style="left:186px;top:4px">400/27°</div><div class="c" style="left:443px;width:57px;text-align:center;top:4px">8827</div><div class="c" style="left:507px;top:4px">ISOSpeedRatings</div><div class="c" style="left:625px;top:4px">SHORT</div></div>
<div class="ln" style="left:28px;top:142px;width:695px"></div>
<div class="a" style="left:0;top:143px;width:730px;height:34px"><svg class="a" style="left:7px;margin-left:4px;top:3px" width="14" height="14" viewBox="0 0 14 14"><rect x="0.5" y="1" width="13" height="12.5" rx="0.5" fill="#fdfdfd" stroke="#bdbdbd"/><rect x="0" y="1" width="14" height="4.8" fill="#e81c1c"/><rect x="2.8" y="0" width="2" height="3" rx="0.8" fill="#c8c8c8"/><rect x="9.2" y="0" width="2" height="3" rx="0.8" fill="#c8c8c8"/><path d="M4.5 7.5 L5.5 7 V11.5 M7 7.2 H9.5 L7.8 11.5" fill="none" stroke="#8a8a8a" stroke-width="1"/></svg><div class="c" style="left:30px;top:4px">Datum der<br>Originaldatengenerierung</div><div class="c blue" style="left:186px;top:4px">2016-06-26 19:39:29</div><div class="c" style="left:443px;width:57px;text-align:center;top:4px">9003</div><div class="c" style="left:507px;top:4px">DateTimeOriginal</div><div class="c" style="left:625px;top:4px">ASCII(20)</div></div>
<div class="ln" style="left:28px;top:176px;width:695px"></div>
<div class="a" style="left:0;top:177px;width:730px;height:34px"><svg class="a" style="left:7px;margin-left:4px;top:3px" width="14" height="14" viewBox="0 0 14 14"><rect x="0.5" y="1" width="13" height="12.5" rx="0.5" fill="#fdfdfd" stroke="#bdbdbd"/><rect x="0" y="1" width="14" height="4.8" fill="#e81c1c"/><rect x="2.8" y="0" width="2" height="3" rx="0.8" fill="#c8c8c8"/><rect x="9.2" y="0" width="2" height="3" rx="0.8" fill="#c8c8c8"/><path d="M4.5 7.5 L5.5 7 V11.5 M7 7.2 H9.5 L7.8 11.5" fill="none" stroke="#8a8a8a" stroke-width="1"/></svg><div class="c" style="left:30px;top:4px">Datum der<br>Digitaldatengenerierung</div><div class="c blue" style="left:186px;top:4px">2016-06-26 19:39:29</div><div class="c" style="left:443px;width:57px;text-align:center;top:4px">9004</div><div class="c" style="left:507px;top:4px">DateTimeDigitized</div><div class="c" style="left:625px;top:4px">ASCII(20)</div></div>
<div class="ln" style="left:28px;top:210px;width:695px"></div>
<div class="a" style="left:0;top:211px;width:730px;height:21px"><div class="c" style="left:30px;top:4px">Belichtungskorrektur</div><div class="c blue" style="left:186px;top:4px">±0 LW</div><div class="c" style="left:443px;width:57px;text-align:center;top:4px">9204</div><div class="c" style="left:507px;top:4px">ExposureBiasValue</div><div class="c" style="left:625px;top:4px">SRATIONAL</div></div>
<div class="ln" style="left:28px;top:231px;width:695px"></div>
<div class="a" style="left:0;top:232px;width:730px;height:21px"><svg class="a" style="left:7px;margin-left:4px;top:3px" width="14" height="14" viewBox="0 0 14 14"><circle cx="7" cy="7" r="6.8" fill="#8e8e8e"/><polygon points="10.09,7.83 7.83,10.09 4.74,9.26 3.91,6.17 6.17,3.91 9.26,4.74" fill="#fff"/><path d="M9.90 7.78 L6.09 15.93 M7.78 9.90 L-1.19 10.68 M4.88 9.12 L-0.28 1.75 M4.10 6.22 L7.91 -1.93 M6.22 4.10 L15.19 3.32 M9.12 4.88 L14.28 12.25 " stroke="#fff" stroke-width="1.2"/></svg><div class="c" style="left:30px;top:4px">Größtmögliche Blende</div><div class="c blue" style="left:186px;top:4px">2.97 Av (F2.8)</div><div class="c" style="left:443px;width:57px;text-align:center;top:4px">9205</div><div class="c" style="left:507px;top:4px">MaxApertureValue</div><div class="c" style="left:625px;top:4px">RATIONAL</div></div>
<div class="ln" style="left:28px;top:252px;width:695px"></div>
<div class="a" style="left:0;top:253px;width:730px;height:21px"><div class="c" style="left:30px;top:4px">Belichtungsmessmethode</div><div class="c blue" style="left:186px;top:4px">Mittenbetont</div><div class="c" style="left:443px;width:57px;text-align:center;top:4px">9207</div><div class="c" style="left:507px;top:4px">MeteringMode</div><div class="c" style="left:625px;top:4px">SHORT</div></div>
<div class="ln" style="left:28px;top:273px;width:695px"></div>
<div class="a" style="left:0;top:274px;width:730px;height:21px"><div class="c" style="left:30px;top:4px">Lichtquelle</div><div class="c blue" style="left:186px;top:4px">Unbewölkt</div><div class="c" style="left:443px;width:57px;text-align:center;top:4px">9208</div><div class="c" style="left:507px;top:4px">LightSource</div><div class="c" style="left:625px;top:4px">SHORT</div></div>
<div class="ln" style="left:28px;top:294px;width:695px"></div>
<div class="a" style="left:0;top:295px;width:730px;height:21px"><svg class="a" style="left:7px;margin-left:5px;top:4px" width="12" height="13" viewBox="0 0 12 13"><path d="M4 0.5 H11.5 L8.5 4.5 H11.8 L2.5 12.5 L5 6.5 H1.2 Z" fill="#f2c23a" stroke="#e0a820" stroke-width="0.6"/><path d="M4.6 1.5 H9.5 L7 4.6" fill="none" stroke="#fbe39a" stroke-width="0.8"/></svg><div class="c" style="left:30px;top:4px">Blitz</div><div class="c blue" style="left:186px;top:4px">Blitz wurde nicht ausgelöst, Automodus</div><div class="c" style="left:443px;width:57px;text-align:center;top:4px">9209</div><div class="c" style="left:507px;top:4px">Flash</div><div class="c" style="left:625px;top:4px">SHORT</div></div>
<div class="ln" style="left:28px;top:315px;width:695px"></div>
<div class="a" style="left:0;top:316px;width:730px;height:21px"><div class="c" style="left:30px;top:4px">Brennweite</div><div class="c blue" style="left:186px;top:4px">54 mm</div><div class="c" style="left:443px;width:57px;text-align:center;top:4px">920A</div><div class="c" style="left:507px;top:4px">FocalLength</div><div class="c" style="left:625px;top:4px">RATIONAL</div></div>
<div class="ln" style="left:28px;top:336px;width:695px"></div>
<div class="a" style="left:0;top:337px;width:730px;height:21px"><svg class="a" style="left:7px;margin-left:5px;top:4px" width="12" height="13" viewBox="0 0 12 13"><rect x="0.5" y="0.5" width="11" height="12" fill="#fafafa" stroke="#b0b0b0"/><path d="M3 3.5 H9 M3 5.5 H9 M3 7.5 H9 M3 9.5 H8" stroke="#a8a8a8" stroke-width="1"/></svg><div class="c" style="left:30px;top:4px">Benutzerkommentar</div><div class="c blue" style="left:186px;top:4px"></div><div class="c" style="left:443px;width:57px;text-align:center;top:4px">9286</div><div class="c" style="left:507px;top:4px">UserComment</div><div class="c" style="left:625px;top:4px">UNDEFINED(125)</div></div>
<div class="ln" style="left:28px;top:357px;width:695px"></div>
<div class="a" style="left:0;top:358px;width:730px;height:34px"><svg class="a" style="left:7px;margin-left:3px;top:3px" width="15" height="15" viewBox="0 0 15 15"><circle cx="7.5" cy="7.5" r="6.8" fill="#e9c38a" stroke="#c98f45" stroke-width="0.8"/><circle cx="7.5" cy="7.5" r="5" fill="#dde9f6" stroke="#9fb8d6" stroke-width="0.6"/><path d="M7.5 4 V7.5 H10" fill="none" stroke="#4a5a70" stroke-width="1"/></svg><div class="c" style="left:30px;top:4px">DateTimeOriginal 1/100<br>Sekunden</div><div class="c blue" style="left:186px;top:4px">0"</div><div class="c" style="left:443px;width:57px;text-align:center;top:4px">9291</div><div class="c" style="left:507px;top:4px">SubSecTimeOriginal</div><div class="c" style="left:625px;top:4px">ASCII(3)</div></div>
<div class="ln" style="left:28px;top:391px;width:695px"></div>
<div class="a" style="left:0;top:392px;width:730px;height:34px"><svg class="a" style="left:7px;margin-left:3px;top:3px" width="15" height="15" viewBox="0 0 15 15"><circle cx="7.5" cy="7.5" r="6.8" fill="#e9c38a" stroke="#c98f45" stroke-width="0.8"/><circle cx="7.5" cy="7.5" r="5" fill="#dde9f6" stroke="#9fb8d6" stroke-width="0.6"/><path d="M7.5 4 V7.5 H10" fill="none" stroke="#4a5a70" stroke-width="1"/></svg><div class="c" style="left:30px;top:4px">DateTimeDigitized 1/100<br>Sekunden</div><div class="c blue" style="left:186px;top:4px">0"</div><div class="c" style="left:443px;width:57px;text-align:center;top:4px">9292</div><div class="c" style="left:507px;top:4px">SubSecTimeDigitized</div><div class="c" style="left:625px;top:4px">ASCII(3)</div></div>
<div class="ln" style="left:28px;top:425px;width:695px"></div>
<div class="a" style="left:0;top:426px;width:730px;height:21px"><svg class="a" style="left:7px;margin-left:4px;top:3px" width="13" height="14" viewBox="0 0 13 14"><path d="M6.5 0.5 L12.5 3.5 L6.5 6.5 L0.5 3.5 Z" fill="#8ee6f0"/><path d="M0.5 3.5 L6.5 6.5 V13.5 L0.5 10.5 Z" fill="#f2e23a"/><path d="M12.5 3.5 L6.5 6.5 V13.5 L12.5 10.5 Z" fill="#e04ad8"/></svg><div class="c" style="left:30px;top:4px">Farbraum</div><div class="c blue" style="left:186px;top:4px">sRGB</div><div class="c" style="left:443px;width:57px;text-align:center;top:4px">A001</div><div class="c" style="left:507px;top:4px">ColorSpace</div><div class="c" style="left:625px;top:4px">SHORT</div></div>
<div class="ln" style="left:28px;top:446px;width:695px"></div>
<div class="a" style="left:12px;top:451px;width:12px;height:2px;border-radius:2px 2px 0 0;background:#7ea6dc"></div><div class="a" style="left:39px;top:452px;width:1px;height:2px;background:#3a3a80"></div><div class="a" style="left:45px;top:452px;width:1px;height:2px;background:#3a3a80"></div><div class="a" style="left:47px;top:452px;width:1px;height:2px;background:#3a3a80"></div></div>
</div>
<div id="sb" class="a">
<div class="a" style="left:1px;top:0;width:13px;height:17px;background:#ededed"></div>
<div class="a" style="left:1px;top:520px;width:13px;height:17px;background:#ededed"></div>
<svg class="a" style="left:4px;top:6px" width="9" height="6" viewBox="0 0 9 6"><path d="M0.8 5.2 L4.5 1.3 L8.2 5.2" fill="none" stroke="#555" stroke-width="1.8"/></svg>
<div class="a" style="left:1px;top:44px;width:13px;height:30px;background:#c9c9c9"></div>
<svg class="a" style="left:4px;top:526px" width="9" height="6" viewBox="0 0 9 6"><path d="M0.8 0.8 L4.5 4.7 L8.2 0.8" fill="none" stroke="#555" stroke-width="1.8"/></svg>
</div>
<div id="search" class="a">
<svg class="a" style="left:6px;top:7px" width="15" height="15" viewBox="0 0 15 15"><rect x="0.5" y="0.5" width="14" height="14" rx="1" fill="url(#gred)" stroke="#c0503a"/><path d="M4 4 L11 11 M11 4 L4 11" stroke="#fff" stroke-width="2.4"/></svg>
<div class="a" style="left:32px;top:8px">Suchen:</div>
<div class="a" style="left:77px;top:5px;width:682px;height:18px;background:#fff;border:1px solid #c5c1b9"></div>
</div>

</body></html>
